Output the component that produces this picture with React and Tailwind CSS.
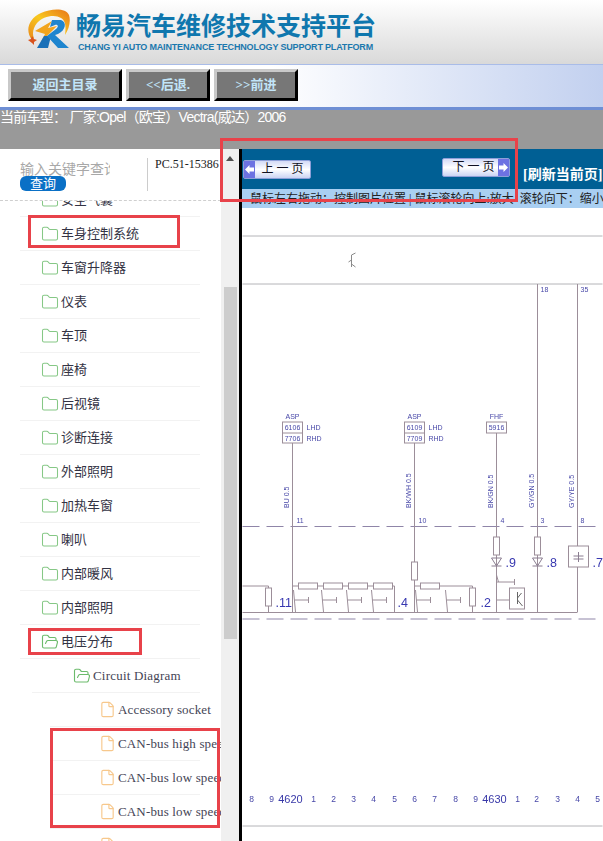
import { Folder, FolderOpen, File } from "lucide-react"

const cjk = '"Liberation Serif", "Noto Sans CJK SC", serif'

const rows = [
  { label: "安全气囊", level: 0 },
  { label: "车身控制系统", level: 0 },
  { label: "车窗升降器", level: 0 },
  { label: "仪表", level: 0 },
  { label: "车顶", level: 0 },
  { label: "座椅", level: 0 },
  { label: "后视镜", level: 0 },
  { label: "诊断连接", level: 0 },
  { label: "外部照明", level: 0 },
  { label: "加热车窗", level: 0 },
  { label: "喇叭", level: 0 },
  { label: "内部暖风", level: 0 },
  { label: "内部照明", level: 0 },
  { label: "电压分布", level: 0, open: true },
  { label: "Circuit Diagram", level: 1, open: true },
  { label: "Accessory socket", level: 2 },
  { label: "CAN-bus high speed", level: 2 },
  { label: "CAN-bus low speed", level: 2 },
  { label: "CAN-bus low speed", level: 2 },
  { label: "Central locking", level: 2 },
]

function TreeRow({ row }) {
  if (row.level === 2) {
    return (
      <div className="h-[34px] ml-[50px] w-[150px] border-b border-[#f2f2f2] flex items-center pl-[49px] whitespace-nowrap text-[13px] tracking-[0.15px] text-[#444455]">
        <File size={17} strokeWidth={1.6} className="text-[#f7c88c] shrink-0 mr-[2px]" />
        {row.label}
      </div>
    )
  }
  if (row.level === 1) {
    return (
      <div className="h-[34px] ml-[32px] w-[168px] border-b border-[#f2f2f2] flex items-center pl-[41px] whitespace-nowrap text-[13px] tracking-[0.2px] text-[#444455]">
        <FolderOpen size={18} strokeWidth={1.5} className="text-[#6cbb6c] shrink-0 mr-[2px]" />
        {row.label}
      </div>
    )
  }
  return (
    <div className="h-[34px] ml-[20px] w-[180px] border-b border-[#f2f2f2] flex items-center pl-[21px] whitespace-nowrap text-[13px] text-[#333344]">
      {row.open ? (
        <FolderOpen size={18} strokeWidth={1.5} className="text-[#6cbb6c] shrink-0 mr-[2px]" />
      ) : (
        <Folder size={18} strokeWidth={1.4} className="text-[#86c886] shrink-0 mr-[2px]" />
      )}
      {row.label}
    </div>
  )
}

function Logo() {
  return (
    <svg width="48" height="42" viewBox="0 0 48 42" className="shrink-0">
      <defs>
        <linearGradient id="ring" x1="0" y1="1" x2="1" y2="0">
          <stop offset="0" stopColor="#e8861a" />
          <stop offset="0.5" stopColor="#f8c81f" />
          <stop offset="1" stopColor="#e8741a" />
        </linearGradient>
      </defs>
      <path
        d="M7 31 C0 22 3 10 16 4 C27 -1 41 -1 44 6 C46 12 44 20 40 26 C41 18 41 12 36 9 C30 5 18 7 12 14 C8 19 7 25 9 29 Z"
        fill="url(#ring)"
      />
      <path d="M7 34 L3 31 L6 30 L7 27 L9 30 L12 31 L9 33 L9 36 Z" fill="#d9531e" />
      <path d="M10 22 L27 12 L23 19 L32 17 L16 33 L20 25 Z" fill="#f2a41d" />
      <path d="M12 39 L19 27 L26 27 L23 39 Z" fill="#1a70b8" />
      <path d="M27 11 L36 11 C42 13 41 21 33 25 L30 26 L44 39 L33 39 L22 27 L31 20 C34 18 33 15 30 16 L25 18 Z" fill="#1e85cf" />
    </svg>
  )
}

function NavButton({ label, w }) {
  return (
    <button
      className={`${w} h-[32px] bg-[#777777] border-[3px] border-t-[#c9c9c9] border-l-[#c9c9c9] border-r-black border-b-black text-[13px] font-bold text-[#c2e5f9] flex items-center justify-center`}
    >
      {label}
    </button>
  )
}

function PageButton({ label, dir }) {
  const arrow = (
    <span className="w-[11px] self-stretch bg-[#6d72e2] flex items-center justify-center shrink-0">
      <svg width="9" height="9" viewBox="0 0 9 9">
        <path d={dir === "prev" ? "M0 4.5 L4.5 0 V2.5 H9 V6.5 H4.5 V9 Z" : "M9 4.5 L4.5 0 V2.5 H0 V6.5 H4.5 V9 Z"} fill="white" />
      </svg>
    </span>
  )
  return (
    <div className="h-[19px] flex items-stretch bg-gradient-to-b from-[#d3daf6] via-white to-[#cbd4f3] border border-[#8d9fd8] rounded-[2px] text-[12px] leading-[17px] text-[#111122] whitespace-pre">
      {dir === "prev" && arrow}
      <span className={dir === "prev" ? "w-[55px] text-center" : "w-[56px] pl-[6px] text-center"}>{label}</span>
      {dir === "next" && arrow}
    </div>
  )
}

const LINE = "#9c8e99"
const INK = "#4848a8"

function Box({ x, y, a, b }) {
  return (
    <g>
      <rect x={x} y={y} width="20" height={b ? 21 : 11} fill="none" stroke={LINE} />
      {b && <line x1={x} x2={x + 20} y1={y + 11} y2={y + 11} stroke={LINE} />}
      <text x={x + 10} y={y + 8} textAnchor="middle" fontSize="7" fill={INK}>{a}</text>
      {b && <text x={x + 10} y={y + 19} textAnchor="middle" fontSize="7" fill={INK}>{b}</text>}
      {b && <text x={x + 24} y={y + 8} fontSize="7" fill={INK}>LHD</text>}
      {b && <text x={x + 24} y={y + 19} fontSize="7" fill={INK}>RHD</text>}
    </g>
  )
}

function Switch({ x, w = 15 }) {
  return (
    <g stroke={LINE} fill="none">
      <path d={`M${x} 590 L${x + 2} 612`} />
      <path d={`M${x + 1} 600 H${x + w}`} />
      <path d={`M${x + w} 597 V603`} />
    </g>
  )
}

function Diagram() {
  const nums = [
    [252, "8"], [272, "9"], [314, "1"], [334, "2"], [354, "3"], [374, "4"], [395, "5"], [415, "6"], [435, "7"],
    [456, "8"], [476, "9"], [518, "1"], [537, "2"], [558, "3"], [578, "4"], [598, "5"],
  ]
  return (
    <svg viewBox="243 208 360 633" className="w-full h-full blur-[0.3px]" style={{ fontFamily: "Liberation Sans, sans-serif" }}>
      <line x1="243" x2="603" y1="236" y2="236" stroke="#b4b4b8" />
      <line x1="243" x2="603" y1="284" y2="284" stroke="#b4b4b8" />
      <line x1="243" x2="603" y1="826" y2="826" stroke="#b4b4b8" />
      <path d="M352 255 V267 M352 260 L349 262 M352 255 L356 253 M352 264 L356 267" stroke="#8a8a8a" fill="none" />

      <line x1="243" x2="603" y1="526.5" y2="526.5" stroke="#8f85a8" strokeDasharray="17 7" />
      <line x1="243" x2="603" y1="619" y2="619" stroke="#8f85a8" strokeDasharray="17 7" />
      <line x1="243" x2="578" y1="612.5" y2="612.5" stroke={LINE} />

      <path d={`M293 443 V612 M415 443 V612 M497 433 V612 M538 284 V612 M578 284 V612`} stroke={LINE} fill="none" />
      <text x="541" y="292" fontSize="7" fill={INK}>18</text>
      <text x="581" y="292" fontSize="7" fill={INK}>35</text>

      <Box x={283} y={422} a="6106" b="7706" />
      <Box x={405} y={422} a="6109" b="7709" />
      <Box x={487} y={422} a="5916" />
      <text x="293" y="419" textAnchor="middle" fontSize="7" fill={INK}>ASP</text>
      <text x="415" y="419" textAnchor="middle" fontSize="7" fill={INK}>ASP</text>
      <text x="497" y="419" textAnchor="middle" fontSize="7" fill={INK}>FHF</text>

      {[[289, "BU 0.5"], [411, "BK/WH 0.5"], [493, "BK/GN 0.5"], [534, "GY/GN 0.5"], [574, "GY/YE 0.5"]].map(([x, t]) => (
        <text key={t} transform={`translate(${x} 508) rotate(-90)`} fontSize="7" fill={INK}>{t}</text>
      ))}
      {[[297, "11"], [419, "10"], [501, "4"], [541, "3"], [581, "8"]].map(([x, t]) => (
        <text key={t} x={x} y="523" fontSize="7" fill={INK}>{t}</text>
      ))}

      <g fill="white" stroke={LINE}>
        <rect x="299" y="583" width="19" height="6" />
        <rect x="324" y="583" width="19" height="6" />
        <rect x="349" y="583" width="19" height="6" />
        <rect x="374" y="583" width="19" height="6" />
        <rect x="421" y="583" width="19" height="6" />
        <rect x="266" y="588" width="6" height="18" />
        <rect x="470" y="588" width="6" height="18" />
        <rect x="412" y="562" width="6" height="18" />
        <rect x="494" y="537" width="6" height="18" />
        <rect x="535" y="537" width="6" height="18" />
        <rect x="569" y="546" width="20" height="21" />
        <rect x="510" y="588" width="15" height="21" />
      </g>
      <path d="M243 586 H269 V588 M293 586 H299 M318 586 H324 M343 586 H349 M368 586 H374 M393 586 H395 V612 M415 586 H421 M440 586 H473 V588 M473 606 V612 M269 606 V612 M497 600 H510" stroke={LINE} fill="none" />
      <Switch x={294} /><Switch x={322} /><Switch x={347} /><Switch x={372} /><Switch x={416} /><Switch x={446} />
      <path d="M497 582 H515 M515 579 V585 M497 575 L499 582" stroke={LINE} fill="none" />
      <path d="M492 558 H502 L497 566 Z M492 566 H502 M533 558 H543 L538 566 Z M533 566 H543 M574 556 H584 M574 559 H584 M579 552 V562" stroke="#8a7d90" fill="none" />
      <path d="M518 592 V604 M518 598 L522 593 M518 600 L523 606" stroke="#666" fill="none" />

      {[[276, ".11"], [398, ".4"], [481, ".2"], [506, ".9"], [547, ".8"], [593, ".7"]].map(([x, t], i) => (
        <text key={t} x={x} y={i < 3 ? 607 : 567} fontSize="12.5" fill="#3838b0">{t}</text>
      ))}

      {nums.map(([x, t], i) => (
        <text key={i} x={x} y="802" textAnchor="middle" fontSize="8.5" fill={INK}>{t}</text>
      ))}
      <text x="291" y="803" textAnchor="middle" fontSize="11" fill="#3838a8">4620</text>
      <text x="495" y="803" textAnchor="middle" fontSize="11" fill="#3838a8">4630</text>
    </svg>
  )
}

export default function App() {
  return (
    <div className="relative w-[603px] h-[841px] overflow-hidden flex flex-col bg-white" style={{ fontFamily: cjk }}>
      {/* logo header */}
      <header className="h-[64px] shrink-0 bg-gradient-to-b from-white to-[#d9d9d9] flex items-start pl-[25px] pt-[9px] gap-[3px]">
        <Logo />
        <div className="pt-[1px]">
          <div className="text-[25px] leading-[28px] font-bold text-[#0f77ae] whitespace-nowrap" style={{ fontFamily: '"Noto Sans CJK SC", sans-serif' }}>
            畅易汽车维修技术支持平台
          </div>
          <div className="mt-[3px] text-[9px] leading-[12px] font-bold text-[#1b78ae] whitespace-nowrap ml-[2px] tracking-[-0.17px]" style={{ fontFamily: '"Liberation Sans", sans-serif' }}>
            CHANG YI AUTO MAINTENANCE TECHNOLOGY SUPPORT PLATFORM
          </div>
        </div>
      </header>

      {/* toolbar */}
      <div className="h-[43px] shrink-0 flex items-start gap-[4px] pt-[4px] pl-[8px] bg-gradient-to-r from-white from-[45%] to-[#c2d0ef] border-t border-[#a9bce8]">
        <NavButton label="返回主目录" w="w-[114px]" />
        <NavButton label="<<后退." w="w-[84px]" />
        <NavButton label=">>前进" w="w-[84px]" />
      </div>
      <div className="h-[3px] shrink-0 bg-[#6f8fd4]" />

      {/* current vehicle */}
      <div
        className="h-[39px] shrink-0 bg-[#999999] text-[14px] leading-[15px] text-white whitespace-nowrap tracking-[-0.75px]"
        style={{ fontFamily: '"Liberation Sans", "Noto Sans CJK SC", sans-serif' }}
      >
        当前车型： 厂家:Opel（欧宝）Vectra(威达）2006
      </div>

      <div className="flex-1 flex min-h-0">
        {/* left tree */}
        <aside className="w-[221px] shrink-0 flex flex-col overflow-hidden">
          <div className="h-[52px] shrink-0 relative flex border-b border-dashed border-[#cfcfcf]">
            <div className="w-[147px] pl-[20px] pt-[12px] shrink-0">
              <div className="w-[90px] h-[17px] overflow-hidden whitespace-nowrap text-[14px] leading-[17px] text-[#a8a8a8]">输入关键字查询</div>
              <div className="w-[46px] h-[15px] -mt-[2px] rounded-[6px] bg-[#0a70c6] text-white text-[13px] leading-[15px] text-center">查询</div>
            </div>
            <div className="w-px h-[33px] mt-[9px] bg-[#cccccc]" />
            <div className="pl-[7px] pt-[8px] text-[12px] leading-[15px] text-[#222] whitespace-nowrap">PC.51-15386</div>
          </div>
          <div className="flex-1 min-h-0 overflow-hidden">
            <div className="-mt-[18px]">
              {rows.map((row, i) => (
                <TreeRow key={i} row={row} />
              ))}
            </div>
          </div>
        </aside>

        {/* scrollbar */}
        <div className="w-[18px] shrink-0 bg-[#f0f0f0] flex flex-col items-center">
          <svg width="8" height="5" viewBox="0 0 8 5" className="mt-[7px]">
            <path d="M4 0 L8 5 H0 Z" fill="#505050" />
          </svg>
          <div className="w-[13px] h-[352px] mt-[126px] bg-[#cdcdcd]" />
        </div>

        {/* right panel */}
        <main className="flex-1 min-w-0 flex flex-col border-l-[3px] border-black">
          <div className="h-[40px] shrink-0 bg-[#005f94] flex items-start pl-[1px] whitespace-nowrap">
            <div className="mt-[11px] w-[68px]"><PageButton label="上 一 页" dir="prev" /></div>
            <div className="mt-[9px] ml-[131px] w-[68px]"><PageButton label="下 一 页" dir="next" /></div>
            <span className="ml-[13px] mt-[18px] text-[14px] leading-[16px] font-bold text-white">[刷新当前页]</span>
          </div>
          <div className="h-[19px] shrink-0 bg-[#a9cff2] pl-[8px] pt-[1px] text-[12px] leading-[19px] text-[#222] whitespace-nowrap overflow-hidden">
            鼠标左右拖动：控制图片位置 | 鼠标滚轮向上:放大 &nbsp;滚轮向下：缩小
          </div>
          <div className="flex-1 min-h-0">
            <Diagram />
          </div>
        </main>
      </div>

      {/* red annotation boxes */}
      <div className="absolute left-[28px] top-[215px] w-[152px] h-[33px] border-[3px] border-[#e8424a]" />
      <div className="absolute left-[28px] top-[628px] w-[114px] h-[27px] border-[3px] border-[#e8424a]" />
      <div className="absolute left-[50px] top-[728px] w-[170px] h-[100px] border-[3px] border-[#e8424a]" />
      <div className="absolute left-[220px] top-[138px] w-[298px] h-[64px] border-[3px] border-[#e8424a]" />
    </div>
  )
}
